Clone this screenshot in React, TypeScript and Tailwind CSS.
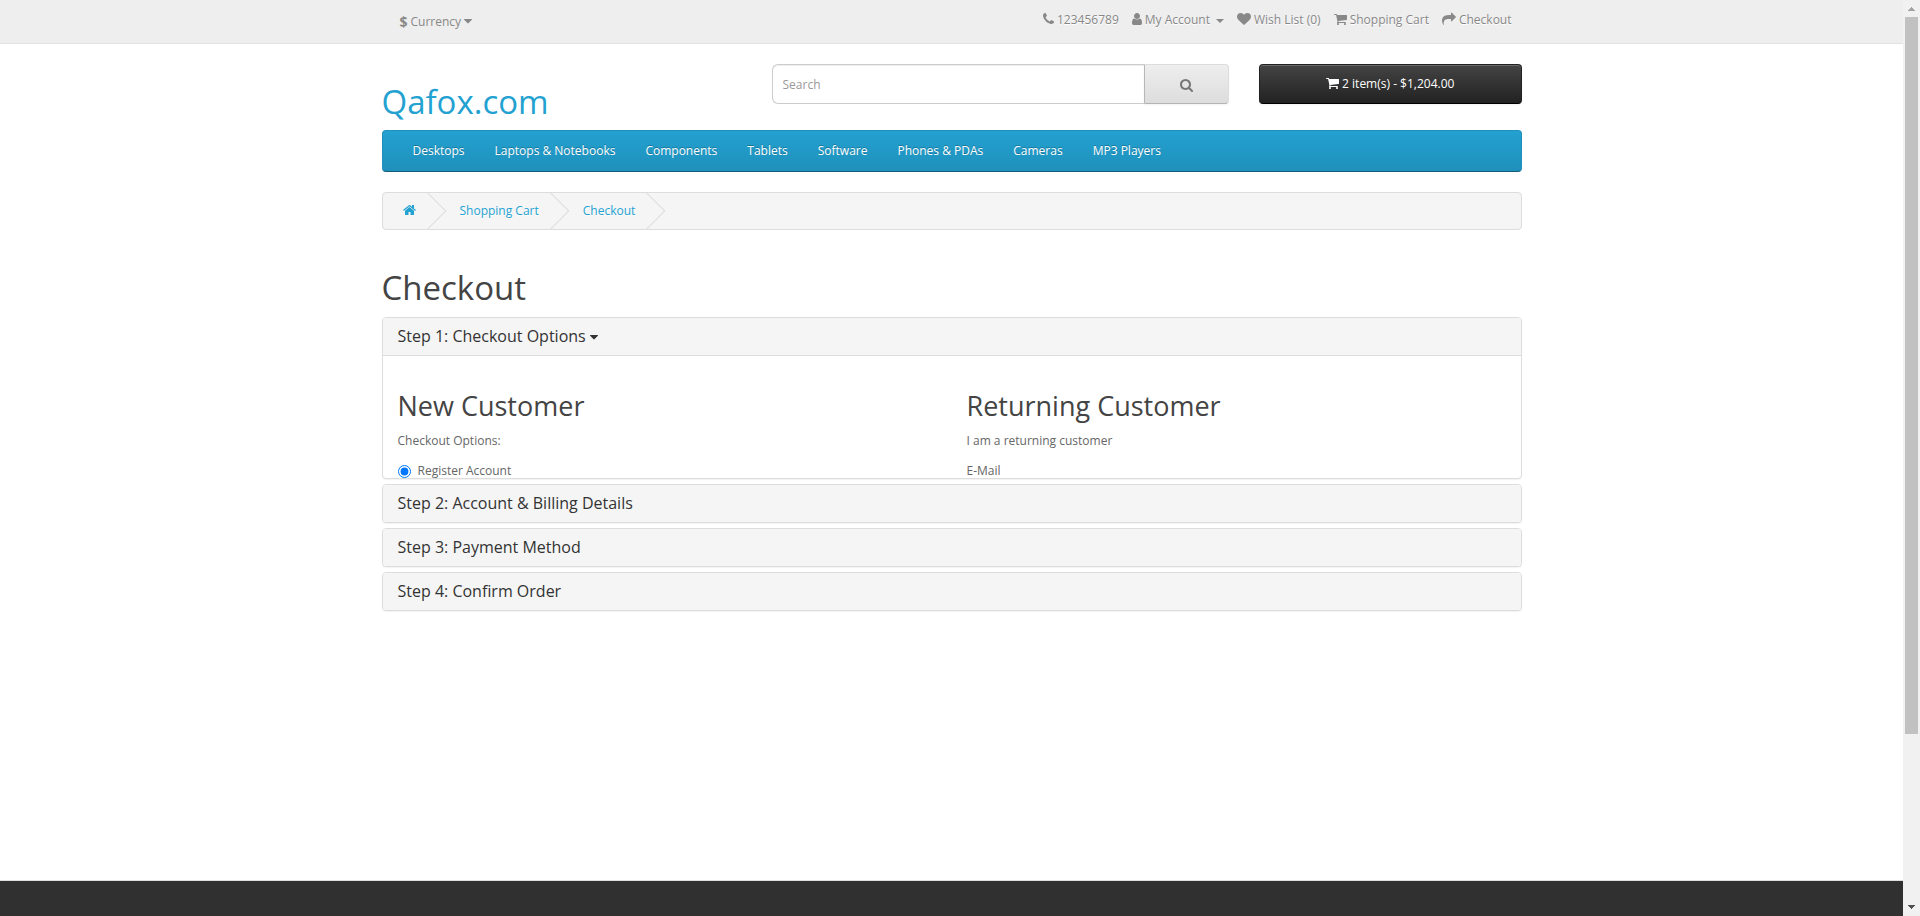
import React from "react";

type Glyph = { box: string; size: string; d: string };

const glyphs = {
  phone: {
    box: "192 0 1408 1792",
    size: "w-[11px]",
    d: "M1600 1240q0 27-10 70.5t-21 68.5q-21 50-122 106-94 51-186 51-27 0-53-3.5t-57.5-12.5-47-14.5-55.5-20.5-49-18q-98-35-175-83-127-79-264-216t-216-264q-48-77-83-175-3-9-18-49t-20.5-55.5-14.5-47-12.5-57.5-3.5-53q0-92 51-186 56-101 106-122 25-11 68.5-21t70.5-10q14 0 21 3 18 6 53 76 11 19 30 54t35 63.5 31 53.5q3 4 17.5 25t21.5 35.5 7 28.5q0 20-28.5 50t-62 55-62 53-28.5 46q0 9 5 22.5t8.5 20.5 14 24 11.5 19q76 137 174 235t235 174q2 1 19 11.5t24 14 20.5 8.5 22.5 5q18 0 46-28.5t53-62 55-62 50-28.5q14 0 28.5 7t35.5 21.5 25 17.5q25 15 53.5 31t63.5 35 54 30q70 35 76 53 3 7 3 21z",
  },
  user: {
    box: "256 0 1280 1792",
    size: "w-[10px]",
    d: "M1536 1399q0 109-62.5 187t-150.5 78h-854q-88 0-150.5-78t-62.5-187q0-85 8.5-160.5t31.5-152 58.5-131 94-89 134.5-34.5q131 128 313 128t313-128q76 0 134.5 34.5t94 89 58.5 131 31.5 152 8.5 160.5zm-256-887q0 159-112.5 271.5t-271.5 112.5-271.5-112.5-112.5-271.5 112.5-271.5 271.5-112.5 271.5 112.5 112.5 271.5z",
  },
  heart: {
    box: "0 0 1792 1792",
    size: "w-[14px]",
    d: "M896 1664q-26 0-44-18l-624-602q-10-8-27.5-26t-55.5-65.5-68-97.5-53.5-121-23.5-138q0-220 127-344t351-124q62 0 126.5 21.5t120 58 95.5 68.5 76 68q36-36 76-68t95.5-68.5 120-58 126.5-21.5q224 0 351 124t127 344q0 221-229 450l-623 600q-18 18-44 18z",
  },
  cart: {
    box: "64 0 1664 1792",
    size: "w-[13px]",
    d: "M704 1536q0 52-38 90t-90 38-90-38-38-90 38-90 90-38 90 38 38 90zm896 0q0 52-38 90t-90 38-90-38-38-90 38-90 90-38 90 38 38 90zm128-1088v512q0 24-16.5 42.5t-40.5 21.5l-1044 122q13 60 13 70 0 16-24 64h920q26 0 45 19t19 45-19 45-45 19h-1024q-26 0-45-19t-19-45q0-11 8-31.5t16-36 21.5-40 15.5-29.5l-177-823h-204q-26 0-45-19t-19-45 19-45 45-19h256q16 0 28.5 6.5t19.5 15.5 13 24.5 8 26 5.5 29.5 4.5 26h1201q26 0 45 19t19 45z",
  },
  share: {
    box: "0 0 1792 1792",
    size: "w-[14px]",
    d: "M1792 640q0 26-19 45l-512 512q-19 19-45 19t-45-19-19-45v-256h-224q-98 0-175.5 6t-154 21.5-133 42.5-105.5 69.5-80 101-48.5 138.5-17.5 181q0 55 5 123 0 6 2.5 23.5t2.5 26.5q0 15-8.5 25t-23.5 10q-16 0-28-17-7-9-13-22t-13.5-30-10.5-24q-127-285-127-451 0-199 53-333 162-403 875-403h224v-256q0-26 19-45t45-19 45 19l512 512q19 19 19 45z",
  },
  search: {
    box: "64 128 1664 1664",
    size: "w-[13px]",
    d: "M1216 832q0-185-131.5-316.5t-316.5-131.5-316.5 131.5-131.5 316.5 131.5 316.5 316.5 131.5 316.5-131.5 131.5-316.5zm512 832q0 52-38 90t-90 38q-54 0-90-38l-343-342q-179 124-399 124-143 0-273.5-55.5t-225-150-150-225-55.5-273.5 55.5-273.5 150-225 225-150 273.5-55.5 273.5 55.5 225 150 150 225 55.5 273.5q0 220-124 399l343 343q37 37 37 90z",
  },
  home: {
    box: "64 0 1664 1792",
    size: "w-[13px]",
    d: "M1472 992v480q0 26-19 45t-45 19h-384v-384h-256v384h-384q-26 0-45-19t-19-45v-480q0-1 .5-3t.5-3l575-474 575 474q1 2 1 6zm223-69l-62 74q-8 9-21 11h-3q-13 0-21-7l-692-577-692 577q-12 8-24 7-13-2-21-11l-62-74q-8-10-7-23.5t11-21.5l719-599q32-26 76-26t76 26l244 204v-195q0-14 9-23t23-9h192q14 0 23 9t9 23v408l219 182q10 8 11 21.5t-7 23.5z",
  },
  caret: {
    box: "384 0 1024 1792",
    size: "w-[8px]",
    d: "M1408 704q0 26-19 45l-448 448q-19 19-45 19t-45-19l-448-448q-19-19-19-45t19-45 45-19h896q26 0 45 19t19 45z",
  },
} satisfies Record<string, Glyph>;

function Icon({ name }: { name: keyof typeof glyphs }) {
  const g = glyphs[name];
  return (
    <svg viewBox={g.box} className={`${g.size} mb-[2px] shrink-0`} fill="currentColor" aria-hidden="true">
      <path d={g.d} />
    </svg>
  );
}

const categories = [
  "Desktops",
  "Laptops & Notebooks",
  "Components",
  "Tablets",
  "Software",
  "Phones & PDAs",
  "Cameras",
  "MP3 Players",
];

const laterSteps = [
  "Step 2: Account & Billing Details",
  "Step 3: Payment Method",
  "Step 4: Confirm Order",
];

const topLink = "flex items-center gap-[3px]";

function TopBar() {
  return (
    <nav className="border-b border-[#e2e2e2] bg-[#eee] text-[#888] [text-shadow:0_1px_#fff]">
      <div className="mx-auto flex h-[43px] max-w-[1140px] items-start justify-between">
        <button type="button" className="ml-[18px] mt-3 flex items-center gap-[3px]">
          <strong className="text-[14px] leading-[20px]">$</strong>
          <span>Currency</span>
          <Icon name="caret" />
        </button>
        <ul className="mr-[10px] mt-[10px] flex gap-[13px]">
          <li><a href="#contact" className={topLink}><Icon name="phone" />123456789</a></li>
          <li>
            <a href="#account" className={topLink}>
              <Icon name="user" />My Account
              <svg viewBox="0 0 8 4" className="ml-[3px] mt-[2px] w-[8px]" fill="currentColor" aria-hidden="true">
                <path d="M0 0h8L4 4z" />
              </svg>
            </a>
          </li>
          <li><a href="#wishlist" className={topLink}><Icon name="heart" />Wish List (0)</a></li>
          <li><a href="#cart" className={topLink}><Icon name="cart" />Shopping Cart</a></li>
          <li><a href="#checkout" className={topLink}><Icon name="share" />Checkout</a></li>
        </ul>
      </div>
    </nav>
  );
}

function Header() {
  return (
    <header className="mt-5 grid grid-cols-12 gap-[30px]">
      <div className="col-span-4 pt-5 text-[33px] leading-[36px] text-[#23a1d1]">
        <a href="#home">Qafox.com</a>
      </div>
      <form className="col-span-5 flex h-10" onSubmit={(e) => e.preventDefault()}>
        <input
          type="text"
          aria-label="Search"
          placeholder="Search"
          className="min-w-0 flex-1 rounded-l-md border border-r-0 border-[#ccc] bg-white px-[10px] pt-[2px] text-[12px] text-[#555] shadow-[inset_0_1px_1px_rgba(0,0,0,0.075)] placeholder:text-[#999]"
        />
        <button
          type="submit"
          aria-label="Search"
          className="flex w-[85px] items-center justify-center rounded-r border border-t-[#ddd] border-r-[#ddd] border-b-[#b3b3b3] border-l-[#b7b7b7] bg-linear-to-b from-[#eee] to-[#ddd] pt-1 text-[#777] shadow-[0_1px_2px_rgba(0,0,0,0.05)]"
        >
          <Icon name="search" />
        </button>
      </form>
      <button
        type="button"
        className="col-span-3 flex h-10 items-center justify-center gap-[3px] rounded border border-[#222] border-b-black bg-linear-to-b from-[#444] to-[#222] text-white shadow-[inset_0_1px_0_rgba(255,255,255,0.2),0_1px_2px_rgba(0,0,0,0.05)]"
      >
        <Icon name="cart" />2 item(s) - $1,204.00
      </button>
    </header>
  );
}

function Crumb({ href, label, children }: { href: string; label?: string; children: React.ReactNode }) {
  return (
    <li className="relative flex items-center px-5">
      <a href={href} aria-label={label}>{children}</a>
      <span className="absolute top-1/2 -right-[5px] -mt-[13px] h-[26px] w-[26px] rotate-45 border-t border-r border-[#ddd]" />
    </li>
  );
}

const panel = "overflow-hidden rounded border border-[#ddd] bg-white shadow-[0_1px_1px_rgba(0,0,0,0.05)]";
const panelTitle = "bg-[#f5f5f5] px-[15px] py-[10px] text-[16px] leading-[17px] text-[#333]";
const columnTitle = "mt-5 mb-[10px] text-[27px] leading-[30px] text-[#444]";

function CheckoutSteps() {
  return (
    <div className="flex flex-col gap-[5px]">
      <section className={panel}>
        <h4 className={`${panelTitle} border-b border-[#ddd]`}>
          <a href="#step-1" className="flex items-center gap-1">
            Step 1: Checkout Options
            <svg viewBox="384 640 1024 576" className="mt-[2px] w-[8px]" fill="currentColor" aria-hidden="true">
              <path d={glyphs.caret.d} />
            </svg>
          </a>
        </h4>
        <div className="grid h-[122px] grid-cols-2 gap-[30px] overflow-hidden p-[15px] pb-0">
          <div>
            <h2 className={columnTitle}>New Customer</h2>
            <p className="mb-[10px]">Checkout Options:</p>
            <label className="flex items-start gap-[7px]">
              <input type="radio" name="account" defaultChecked className="mt-1 h-[13px] w-[13px]" />
              Register Account
            </label>
          </div>
          <div>
            <h2 className={columnTitle}>Returning Customer</h2>
            <p className="mb-[10px]">I am a returning customer</p>
            <p>E-Mail</p>
          </div>
        </div>
      </section>
      {laterSteps.map((s) => (
        <section key={s} className={panel}>
          <h4 className={panelTitle}>{s}</h4>
        </section>
      ))}
    </div>
  );
}

function ScrollBar() {
  return (
    <div className="sticky top-0 flex h-screen w-[17px] shrink-0 flex-col items-center bg-[#f1f1f1]" aria-hidden="true">
      <svg viewBox="0 0 17 17" className="h-[17px] w-[17px] shrink-0" fill="#a3a3a3" shapeRendering="crispEdges">
        <path d="M8 7h1v1h1v1h1v1h1v1H5v-1h1V9h1V8h1z" />
      </svg>
      <div className="flex w-[13px] flex-1 flex-col">
        <div className="grow-[13] bg-[#c1c1c1]" />
        <div className="grow-[3]" />
      </div>
      <svg viewBox="0 0 17 17" className="h-[17px] w-[17px] shrink-0" fill="#505050" shapeRendering="crispEdges">
        <path d="M5 6h7v1h-1v1h-1v1H9v1H8V9H7V8H6V7H5z" />
      </svg>
    </div>
  );
}

export default function App() {
  return (
    <div className="flex bg-white font-['Open_Sans',sans-serif] text-[12px] leading-[20px] text-[#666]">
      <div className="flex min-h-screen min-w-0 flex-1 flex-col">
        <TopBar />
        <div className="mx-auto w-full max-w-[1140px] flex-1">
          <Header />
          <nav className="mt-[10px] rounded border border-[#1f90bb] border-b-[#145e7a] bg-linear-to-b from-[#23a1d1] to-[#1f90bb] px-[30px] py-[10px]">
            <ul className="flex gap-[30px] text-white [text-shadow:0_-1px_0_rgba(0,0,0,0.25)]">
              {categories.map((c) => (
                <li key={c}><a href="#category">{c}</a></li>
              ))}
            </ul>
          </nav>
          <ol className="mt-5 flex h-[38px] gap-1 overflow-hidden rounded border border-[#ddd] bg-[#f5f5f5] text-[#23a1d1] [text-shadow:0_1px_#fff]">
            <Crumb href="#home" label="Home"><Icon name="home" /></Crumb>
            <Crumb href="#cart">Shopping Cart</Crumb>
            <Crumb href="#checkout">Checkout</Crumb>
          </ol>
          <main>
            <h1 className="mt-10 mb-[11px] text-[33px] leading-[36px] text-[#444]">Checkout</h1>
            <CheckoutSteps />
          </main>
        </div>
        <footer className="h-9 border-t border-[#ddd] bg-[#303030]" />
      </div>
      <ScrollBar />
    </div>
  );
}
